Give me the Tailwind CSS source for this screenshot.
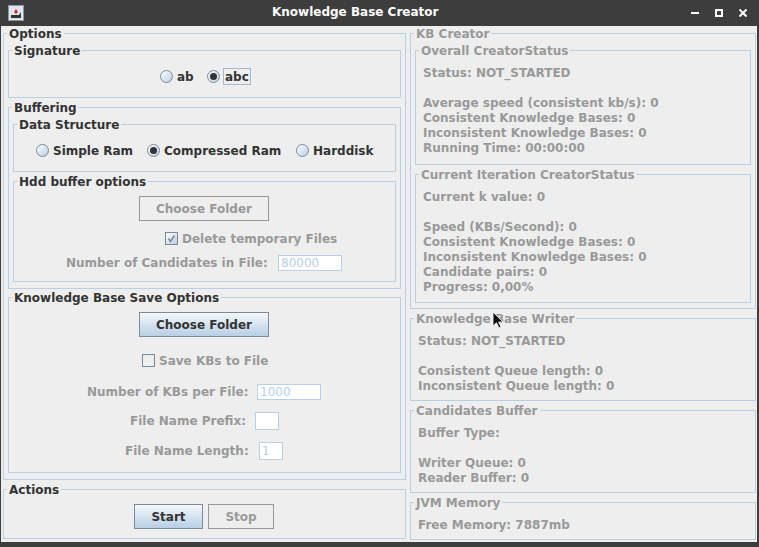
<!DOCTYPE html>
<html lang="en">
<head>
  <meta charset="UTF-8" />
  <title>Knowledge Base Creator</title>
  <script src="https://cdn.jsdelivr.net/npm/@tailwindcss/browser@4"></script>
</head>
<body class="w-[759px] h-[547px] overflow-hidden bg-[#3d3d3d] font-['DejaVu_Sans',sans-serif] text-[12px] leading-[15px] font-bold text-[#333333] whitespace-nowrap">

<!-- Title bar -->
<header class="relative h-[26px] flex items-center text-white">
  <svg class="ml-[8px]" width="16" height="16" viewBox="0 0 16 16">
    <rect x="0.5" y="0.5" width="15" height="15" fill="#dfe6ee" stroke="#8a97a6" />
    <path d="M3 10h8l2-3v6H3z" fill="#333" />
    <path d="M6 7l2-3 2 3-2 2z" fill="#d22" />
  </svg>
  <span class="absolute left-[272px] top-[5px]">Knowledge Base Creator</span>
  <div class="ml-auto mr-[12px] flex items-center gap-[16px]">
    <span class="w-[8px] h-[2px] bg-white"></span>
    <span class="w-[8px] h-[8px] border-2 border-white"></span>
    <svg width="8" height="8" viewBox="0 0 8 8"><path d="M0.5 0.5l7 7M7.5 0.5l-7 7" stroke="#fff" stroke-width="2" /></svg>
  </div>
</header>

<!-- Window content -->
<main class="relative ml-[1px] w-[756px] h-[516px] bg-[#eeeeee] pl-[2px] flex">

  <!-- Left column -->
  <div class="w-[403px] flex flex-col">
    <fieldset class="h-[454px] border border-[#b8cfe5] px-[4px]">
      <legend class="ml-[-1px] px-[2px] h-[14px] leading-[16px]">Options</legend>

      <fieldset class="mt-[3px] h-[55px] border border-[#b8cfe5]">
        <legend class="ml-[3px] px-[2px] h-[14px] leading-[16px]">Signature</legend>
        <div class="flex items-center pl-[151px] h-[38px]">
          <span class="w-[13px] h-[13px] rounded-full border border-[#7a8a99] bg-gradient-to-br from-white to-[#b8cfe5]"></span>
          <span class="ml-[4px] pt-[2px] w-[17px]">ab</span>
          <span class="ml-[13px] w-[13px] h-[13px] rounded-full border border-[#7a8a99] bg-gradient-to-br from-white to-[#b8cfe5] flex items-center justify-center"><span class="w-[7px] h-[7px] rounded-full bg-[#333333]"></span></span>
          <span class="ml-[3px] px-[1px] pt-[1px] h-[17px] border border-[#a3b8cc]">abc</span>
        </div>
      </fieldset>

      <fieldset class="mt-[2px] h-[189px] border border-[#b8cfe5] px-[4px]">
        <legend class="ml-[-1px] px-[2px] h-[14px] leading-[16px]">Buffering</legend>

        <fieldset class="mt-[3px] h-[55px] border border-[#b8cfe5]">
          <legend class="ml-[3px] px-[2px] h-[14px] leading-[16px]">Data Structure</legend>
          <div class="flex items-center pl-[22px] h-[38px]">
            <span class="w-[13px] h-[13px] rounded-full border border-[#7a8a99] bg-gradient-to-br from-white to-[#b8cfe5]"></span>
            <span class="ml-[4px] pt-[2px] w-[80px]">Simple Ram</span>
            <span class="ml-[14px] w-[13px] h-[13px] rounded-full border border-[#7a8a99] bg-gradient-to-br from-white to-[#b8cfe5] flex items-center justify-center"><span class="w-[7px] h-[7px] rounded-full bg-[#333333]"></span></span>
            <span class="ml-[4px] pt-[2px] w-[118px]">Compressed Ram</span>
            <span class="ml-[14px] w-[13px] h-[13px] rounded-full border border-[#7a8a99] bg-gradient-to-br from-white to-[#b8cfe5]"></span>
            <span class="ml-[4px] pt-[2px]">Harddisk</span>
          </div>
        </fieldset>

        <fieldset class="mt-[2px] h-[108px] border border-[#b8cfe5] text-[#999999]">
          <legend class="ml-[3px] px-[2px] h-[14px] leading-[16px] text-[#333333]">Hdd buffer options</legend>
          <button class="block mt-[8px] ml-[125px] w-[130px] h-[25px] pt-[2px] border border-[#999999] font-bold">Choose Folder</button>
          <div class="mt-[10px] ml-[151px] flex items-center h-[15px]">
            <span class="w-[13px] h-[13px] border border-[#7a8a99] bg-gradient-to-br from-white to-[#b8cfe5] flex items-center justify-center">
              <svg width="9" height="9" viewBox="0 0 9 9"><path d="M1.5 4.5l2 3 4-6" fill="none" stroke="#888" stroke-width="1.6" /></svg>
            </span>
            <span class="ml-[4px] pt-[2px]">Delete temporary Files</span>
          </div>
          <div class="mt-[9px] ml-[52px] flex items-center h-[16px]">
            <span class="w-[203px]">Number of Candidates in File:</span>
            <input disabled value="80000" class="ml-[9px] w-[64px] h-[16px] px-[2px] border border-[#b8cfe5] bg-white font-normal text-[#b8cfe5]" />
          </div>
        </fieldset>
      </fieldset>

      <fieldset class="mt-[1px] h-[183px] border border-[#b8cfe5] text-[#999999]">
        <legend class="ml-[3px] px-[2px] h-[14px] leading-[16px] text-[#333333]">Knowledge Base Save Options</legend>
        <button class="block mt-[8px] ml-[130px] w-[130px] h-[25px] pt-[2px] border border-[#7a8a99] bg-gradient-to-b from-[#f4f8fb] to-[#b8cfe5] font-bold text-[#333333]">Choose Folder</button>
        <div class="mt-[16px] ml-[133px] flex items-center h-[15px]">
          <span class="w-[13px] h-[13px] border border-[#7a8a99]"></span>
          <span class="ml-[4px] pt-[2px]">Save KBs to File</span>
        </div>
        <div class="mt-[16px] ml-[78px] flex items-center h-[16px]">
          <span class="w-[161px]">Number of KBs per File:</span>
          <input disabled value="1000" class="ml-[9px] w-[64px] h-[16px] px-[2px] border border-[#b8cfe5] bg-white font-normal text-[#b8cfe5]" />
        </div>
        <div class="mt-[12px] ml-[121px] flex items-center h-[18px]">
          <span class="w-[116px]">File Name Prefix:</span>
          <input disabled value="" class="ml-[9px] w-[24px] h-[18px] px-[2px] border border-[#b8cfe5] bg-white font-normal text-[#b8cfe5]" />
        </div>
        <div class="mt-[12px] ml-[116px] flex items-center h-[18px]">
          <span class="w-[125px]">File Name Length:</span>
          <input disabled value="1" class="ml-[9px] w-[24px] h-[18px] px-[2px] border border-[#b8cfe5] bg-white font-normal text-[#b8cfe5]" />
        </div>
      </fieldset>
    </fieldset>

    <fieldset class="mt-[2px] h-[57px] border border-[#b8cfe5]">
      <legend class="ml-[3px] px-[2px] h-[14px] leading-[16px]">Actions</legend>
      <div class="mt-[8px] ml-[130px] flex gap-[5px]">
        <button class="w-[69px] h-[25px] pt-[2px] border border-[#7a8a99] bg-gradient-to-b from-[#f4f8fb] to-[#b8cfe5] font-bold">Start</button>
        <button class="w-[66px] h-[25px] pt-[2px] border border-[#999999] font-bold text-[#999999]">Stop</button>
      </div>
    </fieldset>
  </div>

  <!-- Right column: everything is disabled grey -->
  <div class="ml-[4px] w-[346px] flex flex-col text-[#999999]">
    <fieldset class="h-[283px] border border-[#b8cfe5] px-[4px]">
      <legend class="ml-[-1px] px-[2px] h-[14px] leading-[16px]">KB Creator</legend>

      <fieldset class="mt-[3px] h-[122px] border border-[#b8cfe5] px-[7px] pt-[9px]">
        <legend class="ml-[-4px] px-[2px] h-[14px] leading-[16px]">Overall CreatorStatus</legend>
        <p class="mb-[15px]">Status: NOT_STARTED</p>
        <p>Average speed (consistent kb/s): 0</p>
        <p>Consistent Knowledge Bases: 0</p>
        <p>Inconsistent Knowledge Bases: 0</p>
        <p>Running Time: 00:00:00</p>
      </fieldset>

      <fieldset class="mt-[2px] h-[136px] border border-[#b8cfe5] px-[7px] pt-[9px]">
        <legend class="ml-[-4px] px-[2px] h-[14px] leading-[16px]">Current Iteration CreatorStatus</legend>
        <p class="mb-[15px]">Current k value: 0</p>
        <p>Speed (KBs/Second): 0</p>
        <p>Consistent Knowledge Bases: 0</p>
        <p>Inconsistent Knowledge Bases: 0</p>
        <p>Candidate pairs: 0</p>
        <p>Progress: 0,00%</p>
      </fieldset>
    </fieldset>

    <fieldset class="mt-[2px] h-[90px] border border-[#b8cfe5] px-[7px] pt-[9px]">
      <legend class="ml-[-4px] px-[2px] h-[14px] leading-[16px]">Knowledge Base Writer</legend>
      <p class="mb-[15px]">Status: NOT_STARTED</p>
      <p>Consistent Queue length: 0</p>
      <p>Inconsistent Queue length: 0</p>
    </fieldset>

    <fieldset class="mt-[2px] h-[90px] border border-[#b8cfe5] px-[7px] pt-[9px]">
      <legend class="ml-[-4px] px-[2px] h-[14px] leading-[16px]">Candidates Buffer</legend>
      <p class="mb-[15px]">Buffer Type:</p>
      <p>Writer Queue: 0</p>
      <p>Reader Buffer: 0</p>
    </fieldset>

    <fieldset class="mt-[2px] h-[45px] border border-[#b8cfe5] px-[7px] pt-[9px]">
      <legend class="ml-[-4px] px-[2px] h-[14px] leading-[16px]">JVM Memory</legend>
      <p>Free Memory: 7887mb</p>
    </fieldset>
  </div>

  <!-- Mouse pointer over the writer legend -->
  <svg class="absolute left-[491px] top-[285px]" width="12" height="19" viewBox="0 0 12 19">
    <path d="M1 1v14l3.5-3.2L7 17l2-1-2.4-5H11z" fill="#111" stroke="#fff" stroke-width="0.8" />
  </svg>
</main>
</body>
</html>
